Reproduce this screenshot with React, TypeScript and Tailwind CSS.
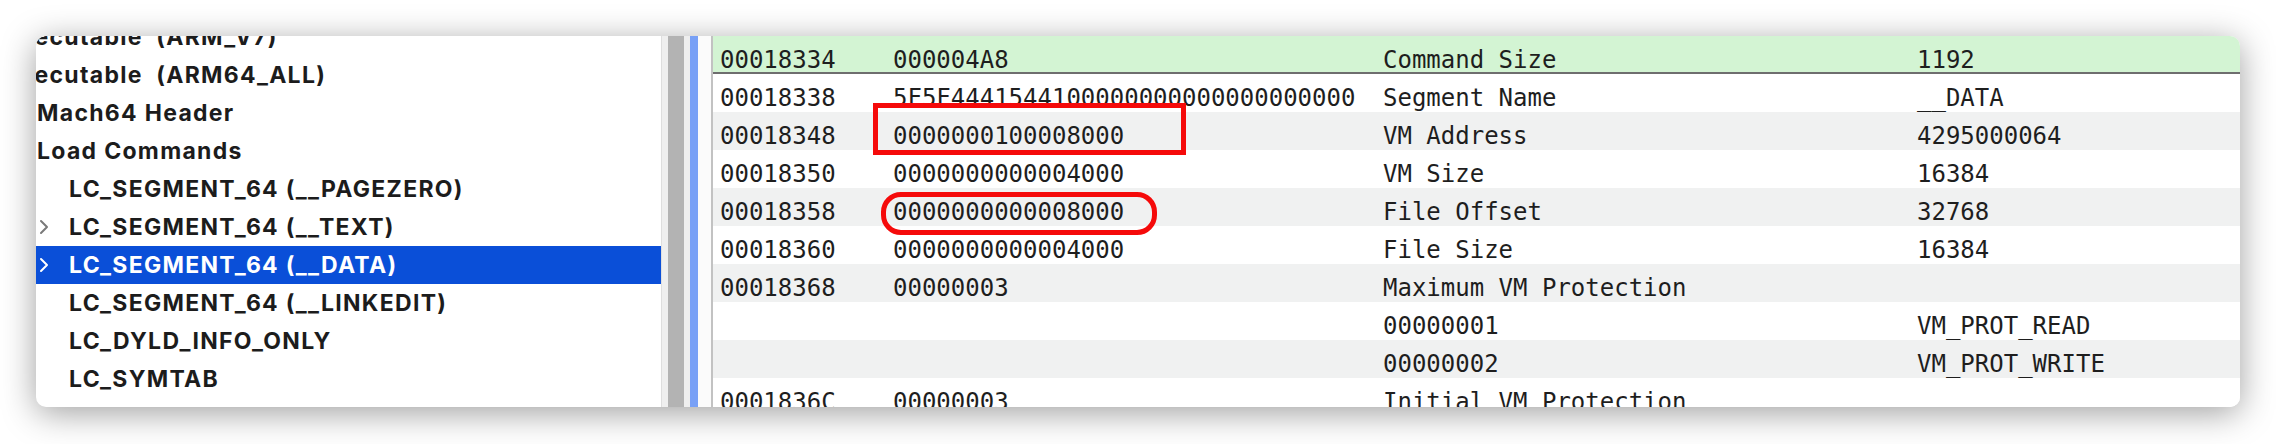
type TreeItem = { label: string; depth: number; chevron?: boolean; selected?: boolean };

const tree: TreeItem[] = [
  { label: 'Executable  (ARM_V7)', depth: 0 },
  { label: 'Executable  (ARM64_ALL)', depth: 0 },
  { label: 'Mach64 Header', depth: 1 },
  { label: 'Load Commands', depth: 1 },
  { label: 'LC_SEGMENT_64 (__PAGEZERO)', depth: 2 },
  { label: 'LC_SEGMENT_64 (__TEXT)', depth: 2, chevron: true },
  { label: 'LC_SEGMENT_64 (__DATA)', depth: 2, chevron: true, selected: true },
  { label: 'LC_SEGMENT_64 (__LINKEDIT)', depth: 2 },
  { label: 'LC_DYLD_INFO_ONLY', depth: 2 },
  { label: 'LC_SYMTAB', depth: 2 },
];

const rows = [
  ['00018334', '000004A8', 'Command Size', '1192'],
  ['00018338', '5F5F4441544100000000000000000000', 'Segment Name', '__DATA'],
  ['00018348', '0000000100008000', 'VM Address', '4295000064'],
  ['00018350', '0000000000004000', 'VM Size', '16384'],
  ['00018358', '0000000000008000', 'File Offset', '32768'],
  ['00018360', '0000000000004000', 'File Size', '16384'],
  ['00018368', '00000003', 'Maximum VM Protection', ''],
  ['', '', '00000001', 'VM_PROT_READ'],
  ['', '', '00000002', 'VM_PROT_WRITE'],
  ['0001836C', '00000003', 'Initial VM Protection', ''],
];

function Disclosure({ light }: { light?: boolean }) {
  return (
    <svg width="10" height="16" viewBox="0 0 10 16" className="ml-[2px]">
      <polyline
        points="2,2 8,8 2,14"
        fill="none"
        stroke={light ? '#ffffff' : '#7a7a7a'}
        strokeWidth="2"
        strokeLinecap="round"
        strokeLinejoin="round"
      />
    </svg>
  );
}

function TreeRow({ item }: { item: TreeItem }) {
  const pad = ['pl-0', 'pl-[32px]', 'pl-[64px]'][item.depth];
  return (
    <div
      className={`flex h-[38px] items-center ${pad} ${
        item.selected ? 'bg-[#0a4fd8] text-white' : 'text-[#1c1c1c]'
      }`}
    >
      <div className="flex w-[32px] shrink-0 items-center">
        {item.chevron && <Disclosure light={item.selected} />}
      </div>
      <span className="whitespace-pre text-[23px] font-bold tracking-[1.3px]">{item.label}</span>
    </div>
  );
}

export default function App() {
  return (
    <div className="h-[444px] w-[2276px] bg-white pl-[36px] pt-[36px]">
      <div className="flex h-[371px] w-[2204px] overflow-hidden rounded-[10px] bg-white shadow-[0_6px_34px_rgba(0,0,0,0.38)]">
        {/* outline view, scrolled a little right and down */}
        <div className="w-[625px] shrink-0 overflow-hidden font-['Inter',sans-serif]">
          <div className="-mt-[18px] -ml-[63px] w-[688px]">
            {tree.map((item) => (
              <TreeRow key={item.label} item={item} />
            ))}
          </div>
        </div>

        {/* split view divider + focus edge */}
        <div className="w-[7px] shrink-0 border-l border-[#dedede] bg-[#efefef]" />
        <div className="w-[16px] shrink-0 bg-[#b3b3b3]" />
        <div className="w-[6px] shrink-0 bg-[#eeeeee]" />
        <div className="w-[8px] shrink-0 bg-[#78a0f6]" />
        <div className="w-[13px] shrink-0 bg-[#fbfbfb]" />
        <div className="w-[2px] shrink-0 bg-[#c2c2c2]" />

        {/* table */}
        <div className="relative flex-1 overflow-hidden font-['DejaVu_Sans_Mono',monospace] text-[24px] text-[#1e1e1e]">
          {rows.map((r, i) => (
            <div
              key={i}
              className={`grid h-[38px] grid-cols-[173px_490px_534px_1fr] items-start pt-[12px] ${
                i === 0
                  ? 'border-b-2 border-[#6e6e6e] bg-[#d3f4d3]'
                  : i % 2 === 0
                  ? 'bg-[#f0f1f1]'
                  : 'bg-white'
              }`}
            >
              {r.map((c, j) => (
                <div key={j} className="whitespace-pre pl-[7px] leading-none">
                  {c}
                </div>
              ))}
            </div>
          ))}

          {/* annotations */}
          <div className="absolute left-[160px] top-[67px] h-[52px] w-[313px] border-[5px] border-[#f50a0a]" />
          <div className="absolute left-[168px] top-[156px] h-[43px] w-[276px] rounded-[20px] border-[5px] border-[#f50a0a]" />
        </div>
      </div>
    </div>
  );
}
